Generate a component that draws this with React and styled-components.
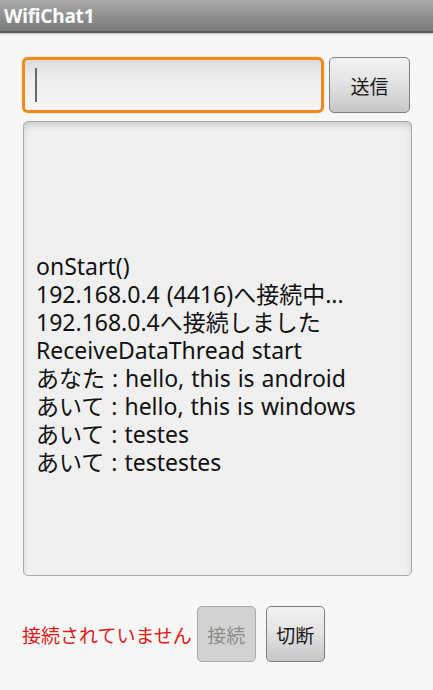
import React from 'react';
import styled, { createGlobalStyle } from 'styled-components';

const GlobalStyle = createGlobalStyle`
  html, body {
    margin: 0;
    padding: 0;
    background: #f7f7f7;
  }

  body {
    font-family: 'Noto Sans', 'Noto Sans CJK JP', sans-serif;
  }
`;

const Screen = styled.div`
  width: 433px;
  height: 690px;
  display: flex;
  flex-direction: column;
  background: #f7f7f7;
  overflow: hidden;
`;

const TitleBar = styled.div`
  height: 31px;
  display: flex;
  align-items: center;
  padding-left: 4px;
  background: linear-gradient(180deg, #ababab 0%, #909090 50%, #7b7b7b 100%);
  border-bottom: 2px solid #5a5a5a;
  box-shadow: 0 1px 2px rgba(0, 0, 0, 0.25);
  color: #fff;
  font-family: 'Noto Sans', sans-serif;
  font-weight: bold;
  font-size: 19px;
  letter-spacing: -0.2px;
`;

const Body = styled.div`
  display: flex;
  flex-direction: column;
  padding: 24px 21px 0 22px;
`;

const InputRow = styled.div`
  display: flex;
  gap: 5px;
  align-items: flex-start;
`;

const Field = styled.div`
  box-sizing: border-box;
  width: 302px;
  height: 56px;
  border: 3px solid #f08a1c;
  border-radius: 6px;
  background: linear-gradient(180deg, #dcdcdc 0%, #ededed 35%, #f6f6f6 100%);
  display: flex;
  align-items: center;
  padding-left: 10px;
  box-shadow: 0 0 1px #e07800;
`;

const Caret = styled.div`
  width: 2px;
  height: 34px;
  background: #6a6a6a;
`;

const Button = styled.div`
  box-sizing: border-box;
  width: ${x => x.w}px;
  height: 56px;
  display: flex;
  align-items: center;
  justify-content: center;
  border: 1px solid ${x => (x.disabled ? '#a8a8a8' : '#7e7e7e')};
  border-radius: 5px;
  background: ${x =>
    x.disabled
      ? '#d2d2d2'
      : 'linear-gradient(180deg, #f2f2f2 0%, #e4e4e4 45%, #c6c6c6 100%)'};
  color: ${x => (x.disabled ? '#8c8c8c' : '#1a1a1a')};
  font-family: 'Noto Sans CJK JP', sans-serif;
  font-size: 19px;
`;

const LogBox = styled.div`
  box-sizing: border-box;
  margin: 8px 0 0 1px;
  width: 389px;
  height: 455px;
  border: 1px solid #a9a9a9;
  border-radius: 5px;
  background: #f0f0f0;
  box-shadow: inset 0 5px 8px -3px rgba(0, 0, 0, 0.2);
  padding: 130px 0 0 12px;
  font-size: 23px;
  line-height: 28px;
  word-spacing: 1px;
  color: #111;
  font-family: 'Noto Sans', 'Noto Sans CJK JP', sans-serif;
`;

const Line = styled.div`
  white-space: nowrap;
`;

const StatusRow = styled.div`
  display: flex;
  align-items: center;
  margin-top: 30px;
`;

const Status = styled.span`
  color: #e01818;
  font-family: 'Noto Sans CJK JP', sans-serif;
  font-size: 19px;
  margin-right: 5px;
`;

const lines = [
  'onStart()',
  '192.168.0.4 (4416)へ接続中...',
  '192.168.0.4へ接続しました',
  'ReceiveDataThread start',
  'あなた : hello, this is android',
  'あいて : hello, this is windows',
  'あいて : testes',
  'あいて : testestes',
];

const App = () => (
  <Screen>
    <GlobalStyle />
    <TitleBar>WifiChat1</TitleBar>
    <Body>
      <InputRow>
        <Field>
          <Caret />
        </Field>
        <Button w={81}>送信</Button>
      </InputRow>
      <LogBox>
        {lines.map(l => (
          <Line key={l}>{l}</Line>
        ))}
      </LogBox>
      <StatusRow>
        <Status>接続されていません</Status>
        <Button w={59} disabled>
          接続
        </Button>
        <Button w={59} style={{ marginLeft: 10 }}>
          切断
        </Button>
      </StatusRow>
    </Body>
  </Screen>
);

export default App;
